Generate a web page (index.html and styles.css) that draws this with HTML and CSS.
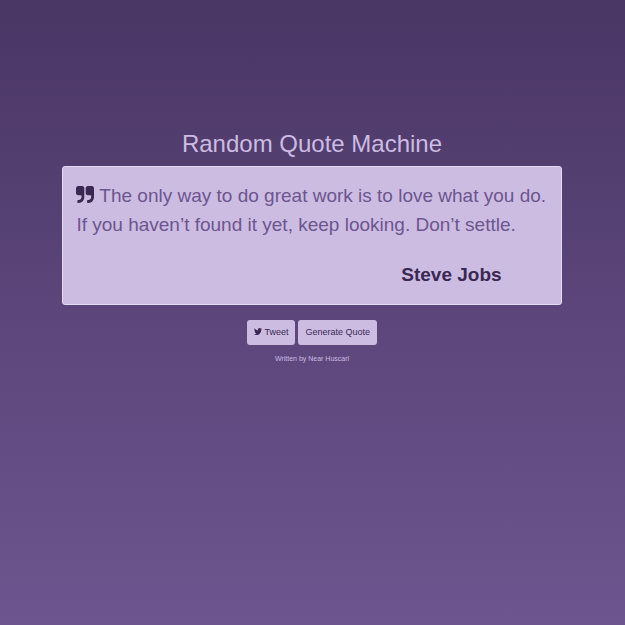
FILE: index.html
```html
<!DOCTYPE html>
<html lang="en">
<head>
<meta charset="utf-8">
<title>Random Quote Machine</title>
<link rel="stylesheet" href="styles.css">
</head>
<body>
<main class="page">
  <h1 class="title">Random Quote Machine</h1>
  <section class="card">
    <p class="quote"><svg class="quote-icon" viewBox="0 0 1664 1408" preserveAspectRatio="none" aria-hidden="true"><path d="M768 192v704q0 104-40.500 198.500T618 1258t-163.500 109.500T256 1408h-64q-26 0-45-19t-19-45v-128q0-26 19-45t45-19h64q106 0 181-75t75-181v-32q0-40-28-68t-68-28H192q-80 0-136-56T0 576V192q0-80 56-136T192 0h384q80 0 136 56t56 136zm896 0v704q0 104-40.500 198.500T1514 1258t-163.500 109.500T1152 1408h-64q-26 0-45-19t-19-45v-128q0-26 19-45t45-19h64q106 0 181-75t75-181v-32q0-40-28-68t-68-28h-224q-80 0-136-56t-56-136V192q0-80 56-136t136-56h384q80 0 136 56t56 136z"/></svg> The only way to do great work is to love what you do. If you haven’t found it yet, keep looking. Don’t settle.</p>
    <p class="author">Steve Jobs</p>
  </section>
  <div class="actions">
    <a class="button" href="#tweet"><svg class="tweet-icon" viewBox="44 256 1576 1280" preserveAspectRatio="none" aria-hidden="true"><path d="M1620 408q-67 98-162 167 1 14 1 42 0 130-38 259.500T1305.500 1125 1121 1335.500t-258 146-323 54.500q-271 0-496-145 35 4 78 4 225 0 401-138-105-2-188-64.500T221 1033q33 5 61 5 43 0 85-11-112-23-185.500-111.500T108 710v-4q68 38 146 41-66-44-105-115t-39-154q0-88 44-163 121 149 294.500 238.500T820 653q-8-38-8-74 0-134 94.500-228.500T1135 256q140 0 236 102 109-21 205-78-37 115-142 178 93-10 186-50z"/></svg> Tweet</a>
    <button class="button" type="button">Generate Quote</button>
  </div>
  <footer class="credit">Written by Near Huscarl</footer>
</main>
</body>
</html>
```
FILE: styles.css
```css
* { box-sizing: border-box; }
body {
  margin: 0;
  min-height: 100vh;
  padding-right: 1px;
  background: linear-gradient(#4a3665, #6d558f);
  color: #ccbce2;
  font-family: "Liberation Sans", Arial, sans-serif;
  display: flex;
  flex-direction: column;
}
.page {
  width: 80%;
  margin: 128px auto 0;
}
.title {
  margin: 0 0 6px;
  font-size: 24px;
  line-height: 32px;
  font-weight: 400;
  text-align: center;
}
.card {
  padding: 14px 13px;
  border: 1px solid #e4daf1;
  border-radius: 3px;
  background: #ccbce2;
  color: #6d558f;
}
.quote {
  margin: 0;
  font-size: 19px;
  line-height: 29px;
}
.quote-icon {
  width: 18px;
  height: 17px;
  vertical-align: -1px;
  fill: #3a2852;
}
.author {
  margin: 21px 46px 0;
  font-size: 19px;
  line-height: 30px;
  font-weight: 700;
  text-align: right;
  color: #3a2852;
}
.actions {
  display: flex;
  justify-content: center;
  gap: 3px;
  margin-top: 15px;
}
.button {
  padding: 0 7px;
  border: 0;
  border-radius: 3px;
  background: #ccbce2;
  color: #3a2852;
  font: 9px/25px "Liberation Sans", Arial, sans-serif;
  text-decoration: none;
  cursor: pointer;
}
.tweet-icon {
  width: 8px;
  height: 7px;
  fill: #3a2852;
}
.credit {
  margin-top: 9px;
  font-size: 7px;
  line-height: 10px;
  text-align: center;
}
```
